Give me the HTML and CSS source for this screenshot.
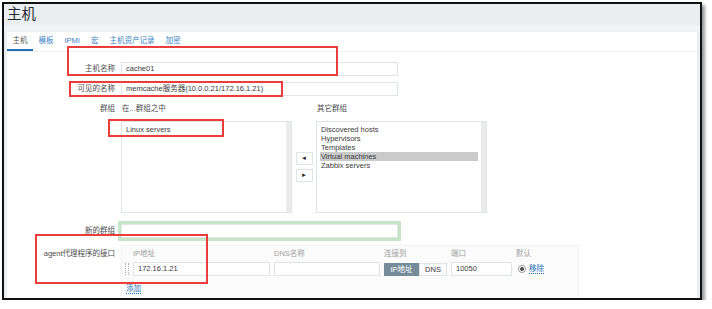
FILE: index.html
```html
<!DOCTYPE html>
<html lang="zh-CN">
<head>
    <meta charset="UTF-8">
    <title>主机</title>
    <link rel="stylesheet" href="styles.css">
</head>
<body>
    <div class="frame">
        <h1 class="page-title">主机</h1>
        <div class="panel">
            <ul class="tabs">
                <li class="active"><a>主机</a></li>
                <li><a>模板</a></li>
                <li><a>IPMI</a></li>
                <li><a>宏</a></li>
                <li><a>主机资产记录</a></li>
                <li><a>加密</a></li>
            </ul>

            <div class="form">
                <div class="row row-name">
                    <label>主机名称</label>
                    <div class="field">cache01</div>
                </div>
                <div class="row row-visible">
                    <label>可见的名称</label>
                    <div class="field">memcache服务器(10.0.0.21/172.16.1.21)</div>
                </div>
                <div class="row row-groups">
                    <label>群组</label>
                    <div class="groups">
                        <span class="list-title">在...群组之中</span>
                        <span></span>
                        <span class="list-title">其它群组</span>
                        <div class="listbox">
                            <div class="item">Linux servers</div>
                        </div>
                        <div class="mover">
                            <button>&#9668;</button>
                            <button>&#9658;</button>
                        </div>
                        <div class="listbox">
                            <div class="item">Discovered hosts</div>
                            <div class="item">Hypervisors</div>
                            <div class="item">Templates</div>
                            <div class="item selected">Virtual machines</div>
                            <div class="item">Zabbix servers</div>
                        </div>
                    </div>
                </div>
                <div class="row row-new">
                    <label>新的群组</label>
                    <div class="field focused"></div>
                </div>
                <div class="row row-iface">
                    <label>agent代理程序的接口</label>
                    <div class="iface">
                        <div class="iface-grid">
                            <span></span>
                            <span class="col-title">IP地址</span>
                            <span class="col-title">DNS名称</span>
                            <span class="col-title">连接到</span>
                            <span class="col-title">端口</span>
                            <span class="col-title">默认</span>

                            <span class="handle"></span>
                            <div class="field">172.16.1.21</div>
                            <div class="field"></div>
                            <div class="toggle">
                                <span class="on">IP地址</span>
                                <span>DNS</span>
                            </div>
                            <div class="field">10050</div>
                            <div class="default">
                                <span class="radio"></span>
                                <a class="link">移除</a>
                            </div>
                        </div>
                        <a class="link add">添加</a>
                    </div>
                </div>
            </div>
        </div>
    </div>

    <!-- red annotation boxes drawn over the screenshot -->
    <div class="mark mark-1"></div>
    <div class="mark mark-2"></div>
    <div class="mark mark-3"></div>
    <div class="mark mark-4"></div>
</body>
</html>
```

FILE: styles.css
```css
body {
    margin: 0;
    background-color: #fff;
    font-family: "Liberation Sans", Arial, "Noto Sans CJK SC", sans-serif;
    font-size: 7.5px;
    color: #4a4a4a;
}

.frame {
    margin: 2px 0 0 2px;
    width: 696px;
    height: 294px;
    border: 2px solid #111;
    background-color: #ebeef0;
    box-shadow: 3px 3px 3px rgba(0, 0, 0, 0.4);
    overflow: hidden;
}

.page-title {
    margin: 0;
    padding: 0 0 0 3px;
    height: 21px;
    line-height: 21px;
    font-size: 14.5px;
    font-weight: normal;
    color: #1f2c33;
    border-bottom: 7px solid #f0f2f4;
}

.panel {
    margin: 0 3px;
    height: 266px;
    background-color: #fff;
}

/* tabs */
.tabs {
    display: flex;
    margin: 0;
    padding: 0;
    list-style: none;
    border-bottom: 1px solid #eef0f2;
}

.tabs a {
    display: block;
    padding: 4px 5.5px;
    line-height: 9px;
    color: #3b82c4;
    border-bottom: 2px solid transparent;
}

.tabs .active a {
    color: #555;
    border-bottom-color: #1f72b8;
}

/* form rows */
.form {
    display: flex;
    flex-direction: column;
}

.row {
    display: grid;
    grid-template-columns: 108px 1fr;
    column-gap: 6px;
    align-items: center;
}

.row label {
    text-align: right;
    color: #4a4a4a;
    line-height: 10px;
}

.field {
    box-sizing: border-box;
    height: 14px;
    line-height: 12px;
    padding-left: 4px;
    border: 1px solid #dfe4e7;
    background-color: #fff;
    color: #3a3a3a;
    white-space: nowrap;
}

.row-name {
    margin-top: 10px;
}

.row-name .field,
.row-visible .field,
.row-new .field {
    width: 277px;
}

.row-visible {
    margin-top: 6px;
}

/* groups */
.row-groups {
    margin-top: 8px;
    align-items: start;
}

.groups {
    display: grid;
    grid-template-columns: 171px 24px 171px;
    grid-template-rows: 10px 92px;
    row-gap: 7px;
}

.list-title {
    line-height: 10px;
    padding-left: 1px;
}

.listbox {
    box-sizing: border-box;
    position: relative;
    padding: 3px 8px 3px 3px;
    border: 1px solid #dfe4e7;
    line-height: 9px;
    color: #3a3a3a;
}

.listbox::after {
    content: "";
    position: absolute;
    top: 0;
    right: 0;
    bottom: 0;
    width: 5px;
    background-color: #ebebeb;
}

.item {
    padding-left: 1px;
}

.item.selected {
    background-color: #cacaca;
}

.mover {
    display: flex;
    flex-direction: column;
    align-items: center;
    justify-content: center;
    gap: 4px;
}

.mover button {
    width: 17px;
    height: 13px;
    padding: 0;
    border: 1px solid #dfe4e7;
    background-color: #fff;
    color: #222;
    font-size: 6px;
    line-height: 11px;
}

/* new group */
.row-new {
    margin-top: 11px;
}

.field.focused {
    box-shadow: 0 0 0 3px #c6e4c6;
}

/* interfaces */
.row-iface {
    margin-top: 7px;
    align-items: start;
}

.row-iface label {
    margin-top: 4px;
}

.iface {
    width: 458px;
    height: 54px;
    box-sizing: border-box;
    padding: 3px 0 0 3px;
    background-color: #fbfbfb;
    border: 1px solid #f0f1f2;
}

.iface-grid {
    display: grid;
    grid-template-columns: 4px 137px 106px 63px 61px auto;
    grid-template-rows: 10px 14px;
    column-gap: 4px;
    row-gap: 3px;
    align-items: center;
}

.col-title {
    color: #a0a0a0;
    line-height: 10px;
}

.handle {
    box-sizing: border-box;
    width: 4px;
    height: 12px;
    border-left: 1px dotted #aaa;
    border-right: 1px dotted #aaa;
}

.toggle {
    display: flex;
    height: 13px;
    line-height: 11px;
}

.toggle span {
    box-sizing: border-box;
    width: 28px;
    text-align: center;
    border: 1px solid #dfe4e7;
    color: #3a3a3a;
}

.toggle .on {
    width: 35px;
    background-color: #768d99;
    border-color: #768d99;
    color: #fff;
}

.default {
    display: flex;
    align-items: center;
    gap: 3px;
    padding-left: 2px;
}

.radio {
    box-sizing: border-box;
    width: 8px;
    height: 8px;
    border: 1px solid #999;
    border-radius: 50%;
    background-color: #fff;
    background-image: radial-gradient(circle, #555 0, #555 1.6px, #fff 2.2px);
}

.link {
    color: #1f72b8;
    border-bottom: 1px dotted #1f72b8;
    line-height: 9px;
}

.add {
    display: inline-block;
    margin: 8px 0 0 1px;
}

/* annotation boxes */
.mark {
    position: absolute;
    border: 2px solid #ec3d3d;
    box-sizing: border-box;
}

.mark-1 { left: 67px; top: 46px; width: 271px; height: 30px; }
.mark-2 { left: 69px; top: 81px; width: 214px; height: 16px; }
.mark-3 { left: 108px; top: 119px; width: 116px; height: 18px; }
.mark-4 { left: 35px; top: 234px; width: 173px; height: 50px; }
```
